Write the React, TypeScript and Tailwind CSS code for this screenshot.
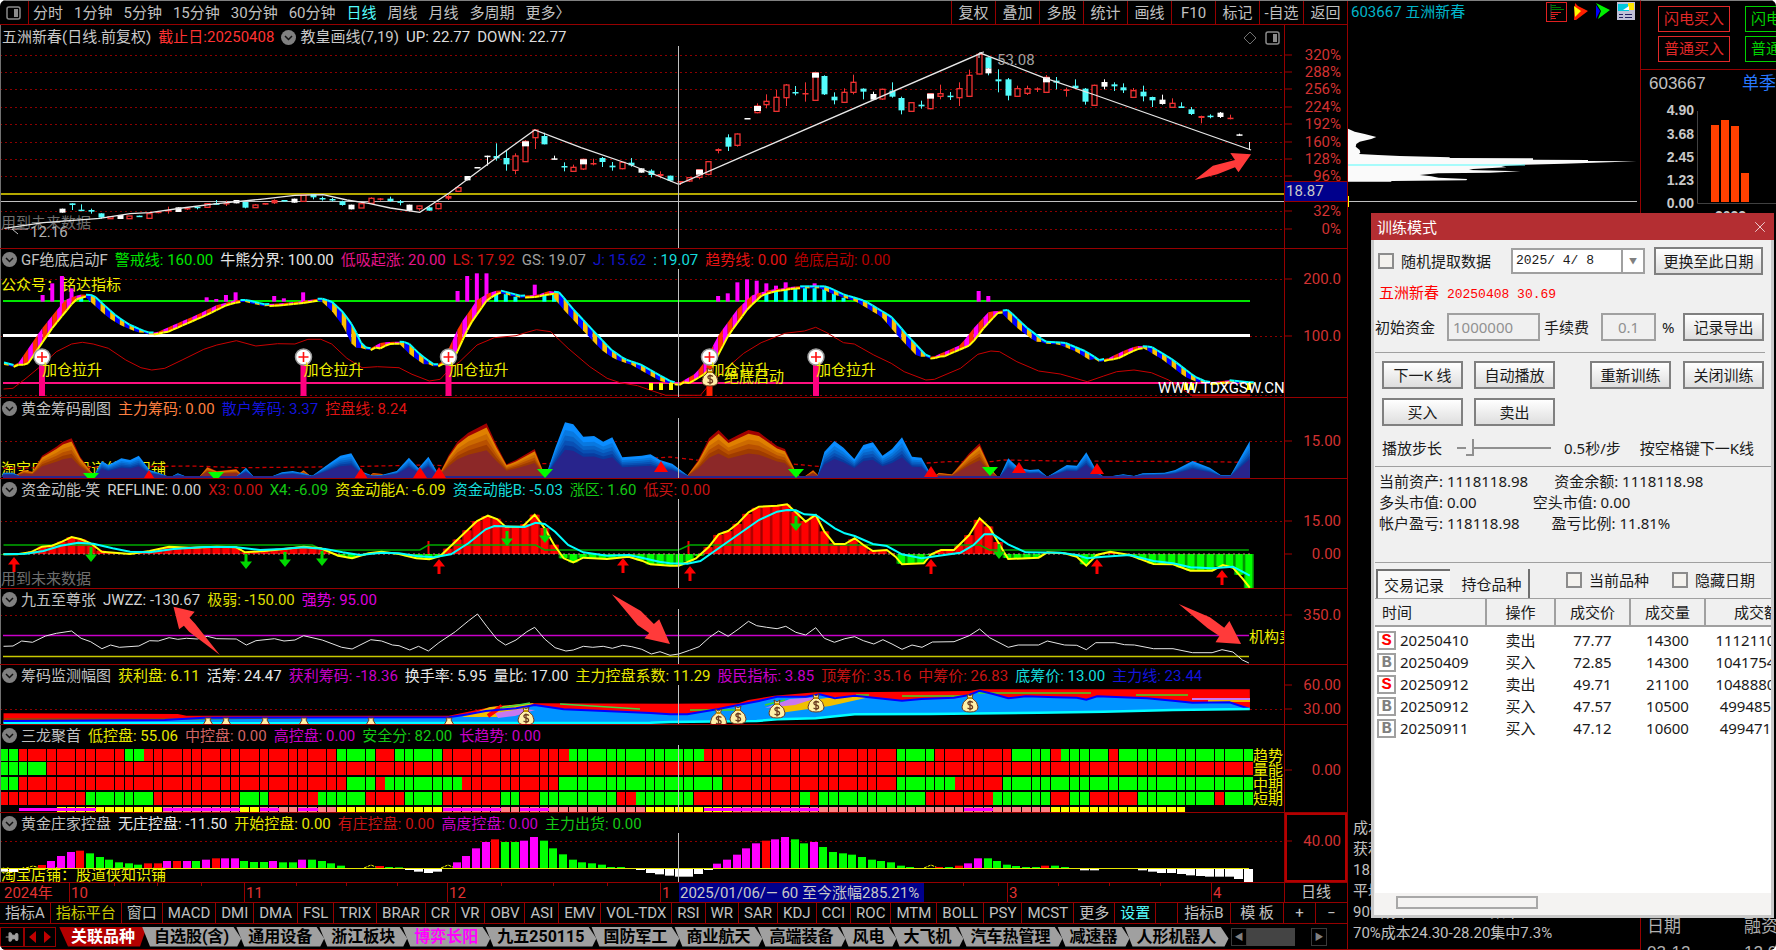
import React from 'react';
import { X, Pin } from 'lucide-react';

type Pt = [number, number];
type Label = [string, string];

const STEP = 9.65;
const barX = (i: number) => 4 + STEP * i;

// Series are stored on a fine grid, in two halves (left of x=670 and right of it).
const toPts = (raw: number[], x0: number, y0: number): Pt[] => {
  const out: Pt[] = [];
  for (let i = 0; i < raw.length; i += 2) {
    out.push([raw[i] / 2.306 + x0, raw[i + 1] / 3 + y0]);
  }
  return out;
};
const series = (y0: number, left: number[], right: number[]): Pt[] => [
  ...toPts(left, 0, y0),
  ...toPts(right, 670, y0),
];
const str = (p: Pt[]) => p.map(([x, y]) => `${x.toFixed(1)},${y.toFixed(1)}`).join(' ');
const at = (p: Pt[], x: number): number => {
  if (x <= p[0][0]) return p[0][1];
  for (let i = 1; i < p.length; i++) {
    if (x <= p[i][0]) {
      const [x1, y1] = p[i - 1];
      const [x2, y2] = p[i];
      return x2 === x1 ? y2 : y1 + ((y2 - y1) * (x - x1)) / (x2 - x1);
    }
  }
  return p[p.length - 1][1];
};

const Line: React.FC<{ p: Pt[]; c: string; w?: number; dash?: string }> = ({ p, c, w = 1, dash }) => (
  <polyline points={str(p)} fill="none" stroke={c} strokeWidth={w} strokeDasharray={dash} />
);

const Dots: React.FC<{ y: number }> = ({ y }) => (
  <line x1={0} x2={1285} y1={y} y2={y} stroke="#8c0000" strokeDasharray="2 3" />
);

/* ---------- candles: [bar, high, top, bottom, low, kind] ---------- */
// r hollow red, s solid red, c cyan, w white, x red with a white head
const candles: [number, number, number, number, number, string][] = [
  [6, 626, 626, 638, 638, 'w'], [7, 610, 610, 615, 630, 'c'], [8, 613, 629, 632, 632, 'c'], [9, 626, 630, 635, 641, 'c'],
  [10, 640, 640, 653, 656, 'c'], [11, 650, 650, 656, 656, 'r'], [12, 645, 645, 657, 657, 'w'], [13, 648, 648, 656, 656, 'r'],
  [14, 647, 647, 651, 651, 'c'], [15, 640, 641, 655, 656, 'r'], [16, 634, 635, 638, 640, 's'], [17, 620, 630, 634, 641, 's'],
  [18, 622, 622, 636, 636, 'w'], [19, 622, 624, 627, 630, 's'], [20, 620, 620, 624, 628, 'c'], [21, 610, 611, 622, 624, 'r'],
  [22, 600, 610, 614, 614, 'c'], [23, 602, 609, 612, 618, 's'], [24, 600, 600, 610, 610, 'w'], [25, 606, 606, 623, 625, 'c'],
  [26, 612, 615, 623, 623, 'r'], [27, 609, 609, 614, 614, 's'], [28, 598, 600, 610, 612, 's'], [29, 600, 600, 604, 604, 'c'],
  [30, 596, 596, 608, 608, 'w'], [31, 583, 585, 604, 604, 'r'], [32, 582, 582, 592, 598, 'c'], [33, 590, 594, 598, 602, 'c'],
  [34, 594, 597, 601, 604, 'c'], [35, 602, 604, 615, 617, 'c'], [36, 614, 614, 628, 628, 'w'], [37, 608, 611, 624, 624, 'r'],
  [38, 592, 595, 610, 612, 'r'], [39, 594, 595, 598, 602, 's'], [40, 590, 596, 603, 606, 'c'], [41, 600, 604, 608, 616, 'c'],
  [42, 614, 614, 632, 634, 'w'], [43, 617, 618, 626, 632, 'r'], [44, 620, 622, 632, 632, 'c'], [45, 608, 611, 626, 628, 'r'],
  [46, 585, 588, 596, 600, 's'], [47, 560, 563, 574, 576, 'r'], [48, 528, 528, 541, 541, 'w'], [49, 501, 501, 504, 504, 'w'],
  [50, 467, 467, 470, 497, 'w'], [51, 430, 468, 475, 482, 'c'], [52, 450, 474, 493, 512, 'c'], [53, 460, 468, 511, 523, 'r'],
  [54, 420, 424, 485, 485, 'x'], [55, 388, 390, 413, 447, 'r'], [56, 398, 408, 433, 433, 'c'], [57, 467, 475, 478, 478, 'w'],
  [58, 487, 498, 501, 514, 'c'], [59, 494, 502, 514, 516, 'r'], [60, 476, 478, 507, 510, 'x'], [61, 476, 489, 492, 496, 's'],
  [62, 471, 474, 486, 501, 'c'], [63, 486, 497, 502, 512, 'c'], [64, 486, 487, 506, 508, 'r'], [65, 474, 488, 496, 500, 'c'],
  [66, 505, 505, 518, 518, 'w'], [67, 508, 512, 525, 532, 'c'], [68, 514, 522, 528, 535, 's'], [69, 527, 527, 542, 544, 'c'],
  [70, 543, 543, 548, 555, 's'], [71, 532, 533, 543, 546, 'r'], [72, 507, 509, 532, 538, 'x'], [73, 483, 485, 523, 526, 'r'],
  [74, 445, 447, 453, 460, 's'], [75, 403, 412, 440, 453, 'c'], [76, 400, 402, 436, 440, 'r'], [77, 354, 354, 357, 357, 'w'],
  [78, 310, 318, 338, 340, 'x'], [79, 283, 304, 314, 325, 'r'], [80, 270, 292, 334, 335, 'r'], [81, 252, 255, 293, 318, 'r'],
  [82, 258, 276, 279, 286, 'c'], [83, 247, 279, 282, 305, 's'], [84, 215, 218, 301, 303, 'x'], [85, 226, 228, 283, 285, 'c'],
  [86, 277, 290, 301, 313, 'c'], [87, 265, 277, 307, 309, 'r'], [88, 224, 247, 277, 283, 'r'], [89, 265, 266, 275, 298, 'c'],
  [90, 275, 282, 299, 300, 'w'], [91, 266, 268, 297, 300, 'r'], [92, 247, 272, 290, 293, 'c'], [93, 290, 294, 331, 343, 'c'],
  [94, 306, 308, 334, 335, 'r'], [95, 302, 314, 319, 326, 'c'], [96, 280, 281, 326, 328, 'x'], [97, 254, 281, 289, 298, 'r'],
  [98, 276, 287, 290, 300, 'c'], [99, 247, 266, 293, 318, 'r'], [100, 209, 226, 289, 291, 'r'], [101, 160, 163, 222, 223, 'r'],
  [102, 172, 172, 205, 226, 'c'], [102, 205, 205, 220, 220, 'w'], [103, 208, 238, 244, 277, 'c'], [104, 234, 238, 287, 301, 'c'],
  [105, 257, 266, 289, 291, 'r'], [106, 257, 266, 280, 285, 'r'], [107, 262, 265, 268, 276, 's'], [108, 225, 232, 277, 279, 'x'],
  [109, 231, 242, 248, 268, 'c'], [110, 263, 268, 273, 290, 's'], [111, 238, 257, 264, 266, 'c'], [112, 264, 266, 305, 314, 'c'],
  [113, 254, 256, 316, 318, 'r'], [114, 238, 246, 260, 268, 'w'], [115, 247, 253, 259, 273, 'c'], [116, 250, 262, 271, 279, 'c'],
  [117, 264, 272, 292, 294, 'r'], [118, 257, 275, 289, 304, 'c'], [119, 290, 291, 301, 321, 'c'], [120, 284, 299, 312, 314, 'w'],
  [121, 295, 310, 322, 324, 'r'], [122, 307, 319, 324, 324, 'c'], [123, 321, 328, 342, 345, 'c'], [124, 347, 348, 354, 370, 's'],
  [125, 343, 347, 350, 355, 'c'], [126, 336, 338, 351, 354, 'w'], [127, 344, 353, 357, 358, 's'], [128, 401, 403, 407, 407, 'w'],
];

const candleColor: Record<string, string> = { r: '#f03232', s: '#f03232', x: '#f03232', c: '#54fcfc', w: '#ffffff' };

const Candles = () => (
  <g>
    {candles.map(([i, hi, top, bot, lo, k], n) => {
      const x = Math.round(barX(i));
      const c = candleColor[k];
      const h = Math.max(1.5, (bot - top) / 3);
      const hollow = k === 'r' || k === 'x';
      return (
        <g key={n}>
          <line x1={x + 0.5} x2={x + 0.5} y1={hi / 3} y2={lo / 3} stroke={c} />
          <rect x={hollow ? x - 2 : x - 2.5} y={top / 3} width={hollow ? 5 : 6} height={h} fill={hollow ? '#000' : c} stroke={hollow ? c : 'none'} strokeWidth={1.3} />
          {k === 'x' && <rect x={x - 3} y={top / 3} width={7} height={5} fill="#fff" />}
        </g>
      );
    })}
  </g>
);

const trendLine = series(0,
  [10, 685, 100, 668, 230, 655, 300, 641, 345, 638, 420, 624, 500, 611, 600, 598, 680, 586, 745, 584, 800, 600, 850, 610, 900, 624, 968, 637, 1035, 580, 1150, 468, 1233, 390, 1340, 443, 1450, 492],
  [20, 553, 717, 160, 860, 232, 980, 285, 1340, 450]);

/* ---------- oscillator band ---------- */
const bandPts = series(245,
  [8, 352, 38, 362, 97, 250, 150, 165, 185, 148, 215, 150, 240, 180, 270, 215, 300, 240, 340, 262, 360, 263, 400, 240, 450, 212, 500, 180, 545, 165, 570, 165, 610, 178, 650, 175, 700, 168, 740, 160, 765, 170, 790, 200, 815, 245, 835, 300, 850, 313, 880, 292, 920, 290, 940, 292, 970, 330, 1000, 358, 1018, 358, 1035, 310, 1060, 240, 1100, 165, 1125, 145, 1150, 135, 1200, 152, 1240, 150, 1265, 138, 1290, 142, 1320, 190, 1370, 260, 1410, 315, 1440, 342, 1480, 360, 1520, 390, 1540, 404],
  [0, 408, 20, 415, 60, 385, 80, 350, 112, 270, 157, 190, 190, 150, 230, 135, 290, 124, 360, 124, 400, 148, 450, 168, 510, 215, 550, 275, 590, 330, 605, 337, 625, 325, 670, 300, 700, 250, 735, 200, 780, 195, 820, 245, 865, 290, 910, 293, 960, 320, 990, 345, 1010, 340, 1050, 315, 1075, 303, 1110, 305, 1160, 345, 1210, 395, 1240, 412, 1290, 406, 1337, 412]);

const Band = () => {
  const cells: React.ReactNode[] = [];
  const half = STEP / 2;
  let n = 0;
  for (let x = 4; x < 1249; x += half) {
    const x2 = x + half;
    const rising = at(bandPts, x - 4) > at(bandPts, x + 8);
    const d = rising ? -10 : 10;
    const u1 = at(bandPts, x);
    const u2 = at(bandPts, x2);
    const l1 = Math.max(u1 + 2, at(bandPts, x + d));
    const l2 = Math.max(u2 + 2, at(bandPts, x2 + d));
    const odd = n % 2 === 1;
    const fill = rising ? (odd ? '#ff00ff' : '#ff3000') : odd ? '#0000ff' : '#ffc000';
    cells.push(<polygon key={n} points={`${x},${u1} ${x2},${u2} ${x2},${l2} ${x},${l1}`} fill={fill} />);
    cells.push(
      rising
        ? <line key={`l${n}`} x1={x} y1={l1} x2={x2} y2={l2} stroke="#ffff00" strokeWidth={2} />
        : <line key={`l${n}`} x1={x} y1={u1} x2={x2} y2={u2} stroke="#00ffff" strokeWidth={2} />
    );
    n++;
  }
  return <g>{cells}</g>;
};

const slowLine = series(245,
  [8, 432, 30, 430, 60, 400, 97, 360, 130, 320, 165, 297, 190, 292, 215, 297, 250, 310, 290, 345, 325, 368, 350, 375, 380, 370, 420, 345, 470, 313, 500, 300, 545, 287, 590, 303, 640, 296, 680, 297, 710, 283, 740, 283, 765, 297, 800, 340, 835, 368, 870, 365, 920, 368, 950, 388, 990, 408, 1015, 403, 1035, 375, 1060, 350, 1100, 300, 1140, 278, 1190, 272, 1215, 262, 1237, 254, 1270, 260, 1310, 310, 1360, 365, 1400, 400, 1430, 413, 1470, 422, 1510, 440, 1535, 451],
  [0, 451, 70, 451, 90, 420, 130, 370, 170, 325, 210, 293, 265, 265, 310, 258, 336, 247, 360, 262, 400, 293, 425, 297, 470, 330, 510, 355, 540, 380, 590, 405, 610, 403, 670, 370, 710, 328, 740, 318, 760, 320, 800, 350, 850, 378, 900, 387, 962, 410, 1000, 393, 1030, 380, 1070, 375, 1110, 383, 1150, 405, 1190, 440, 1205, 451, 1337, 451]);

// [bar, top, bottom]
const pinkTicks: number[][] = [
  [4, 150, 170], [5, 115, 170], [6, 93, 200], [7, 130, 170], [21, 157, 170], [22, 162, 170], [23, 150, 170], [24, 142, 170],
  [28, 153, 170], [29, 160, 170], [31, 142, 170], [47, 138, 170], [48, 93, 170], [49, 85, 190], [50, 85, 170], [55, 119, 150],
  [74, 153, 170], [75, 145, 170], [76, 112, 170], [77, 103, 185], [78, 107, 150], [79, 115, 140], [80, 122, 135], [81, 112, 130], [84, 115, 126],
  [101, 138, 170], [102, 153, 170],
];
const cyanTicks: number[][] = [
  [8, 152, 170], [9, 152, 170], [51, 145, 170], [52, 145, 170], [53, 155, 170], [56, 150, 170], [57, 150, 170],
  [79, 145, 170], [80, 138, 170], [81, 132, 170], [82, 128, 170], [83, 128, 170], [84, 128, 170], [85, 130, 170], [86, 145, 170], [87, 158, 170],
];

/* ---------- chip areas ---------- */
const warm: Pt[][] = [
  toPts([30, 695, 55, 675, 75, 680, 97, 632, 130, 605, 145, 590, 165, 580, 185, 635, 210, 680, 225, 695], 0, 245),
  toPts([460, 695, 478, 665, 500, 678, 545, 672, 562, 695], 0, 245),
  toPts([680, 695, 700, 675, 718, 695], 0, 245),
  toPts([850, 695, 860, 684, 880, 686, 890, 695], 0, 245),
  toPts([1010, 695, 1035, 630, 1055, 590, 1080, 563, 1122, 535, 1145, 600, 1168, 658, 1190, 645, 1233, 612, 1250, 670, 1258, 695], 0, 245),
  toPts([38, 695, 65, 645, 90, 580, 112, 555, 135, 585, 157, 570, 181, 555, 205, 562, 247, 603, 265, 612, 290, 680, 300, 695], 670, 245),
  toPts([310, 695, 330, 675, 345, 695], 670, 245),
  toPts([608, 695, 620, 683, 650, 688, 690, 625, 714, 595, 737, 665, 755, 695], 670, 245),
];
const cool: Pt[][] = [
  toPts([4, 695, 8, 683, 30, 683, 48, 695], 0, 245),
  toPts([215, 695, 235, 648, 250, 660, 280, 640, 300, 645, 320, 632, 345, 675, 365, 683, 390, 695], 0, 245),
  toPts([395, 695, 410, 685, 430, 695], 0, 245),
  toPts([545, 695, 567, 668, 585, 695], 0, 245),
  toPts([625, 695, 650, 682, 675, 678, 700, 685, 720, 692, 765, 650, 785, 632, 810, 625, 835, 680, 860, 692, 880, 690, 915, 678, 943, 638, 965, 670, 988, 635, 1010, 685, 1015, 695], 0, 245),
  toPts([1258, 695, 1280, 610, 1303, 532, 1322, 538, 1345, 575, 1370, 573, 1391, 590, 1412, 577, 1435, 637, 1480, 632, 1500, 628, 1522, 645, 1550, 656, 1590, 695], 0, 245),
  toPts([340, 695, 356, 620, 379, 588, 400, 608, 425, 642, 446, 600, 468, 592, 490, 632, 512, 612, 535, 577, 558, 635, 580, 638, 600, 685, 610, 695], 670, 245),
  toPts([760, 695, 780, 640, 803, 668, 830, 675, 850, 673, 870, 695], 670, 245),
  toPts([870, 695, 915, 660, 938, 662, 960, 622, 985, 680, 1000, 695], 670, 245),
  toPts([1010, 695, 1045, 688, 1070, 693, 1090, 685, 1140, 683, 1165, 675, 1205, 648, 1245, 668, 1270, 690, 1293, 690, 1310, 650, 1337, 588, 1337, 695], 670, 245),
];
const warmShades: [number, string][] = [[1, '#a00000'], [0.92, '#e08000'], [0.8, '#cc6a00'], [0.7, '#b85000'], [0.6, '#a03c00'], [0.5, '#8c2828']];
const coolShades: [number, string][] = [[1, '#0a8cff'], [0.86, '#0878e0'], [0.76, '#0864c8'], [0.67, '#0850b4'], [0.58, '#083ca0'], [0.5, '#28248c']];
const layered = (areas: Pt[][], shades: [number, string][]) =>
  areas.flatMap((a, n) =>
    shades.map(([k, c]) => (
      <polygon key={`${n}-${k}`} fill={c} points={str(a.map(([x, y]): Pt => [x, 477 - (477 - y) * k]))} />
    ))
  );
const chipDash = series(245, [8, 670, 440, 663, 560, 668, 800, 665, 980, 660, 1060, 664, 1450, 648, 1520, 638], [0, 636, 60, 645, 290, 658, 350, 665, 580, 655, 640, 650, 740, 650, 770, 645, 900, 648, 1240, 650, 1337, 652]);

/* ---------- momentum ---------- */
const momA = series(475,
  [8, 238, 40, 238, 70, 232, 97, 215, 120, 212, 143, 200, 165, 186, 187, 193, 209, 205, 235, 230, 300, 237, 345, 228, 390, 215, 440, 218, 500, 215, 545, 217, 565, 232, 610, 228, 655, 222, 700, 215, 740, 220, 780, 242, 812, 250, 850, 235, 880, 230, 920, 237, 960, 250, 990, 253, 1015, 243, 1050, 200, 1100, 138, 1125, 122, 1146, 132, 1166, 155, 1205, 155, 1233, 119, 1256, 160, 1278, 210, 1300, 250, 1322, 262, 1345, 248, 1400, 252, 1450, 245, 1480, 257, 1500, 268],
  [0, 272, 20, 272, 60, 250, 90, 215, 112, 178, 134, 168, 157, 145, 181, 112, 205, 95, 247, 92, 270, 88, 290, 112, 313, 140, 336, 120, 356, 170, 379, 207, 403, 207, 426, 190, 446, 210, 468, 228, 500, 225, 520, 245, 535, 268, 585, 265, 602, 238, 625, 225, 655, 225, 690, 180, 714, 130, 737, 158, 758, 205, 780, 252, 850, 248, 870, 232, 910, 235, 938, 245, 960, 272, 984, 240, 1015, 230, 1060, 240, 1115, 267, 1160, 268, 1200, 287, 1250, 287, 1275, 270, 1298, 278, 1320, 310, 1337, 338]);
const momB = series(475,
  [8, 238, 60, 236, 100, 228, 140, 212, 180, 203, 215, 206, 260, 220, 300, 230, 345, 232, 400, 222, 470, 216, 540, 216, 600, 225, 650, 222, 700, 217, 750, 222, 790, 232, 830, 240, 880, 233, 920, 235, 960, 243, 1000, 247, 1040, 238, 1080, 205, 1120, 163, 1140, 153, 1210, 156, 1235, 143, 1256, 147, 1280, 170, 1310, 210, 1345, 232, 1400, 242, 1450, 240, 1480, 248, 1520, 260],
  [0, 265, 40, 266, 70, 258, 112, 220, 150, 185, 205, 135, 247, 110, 270, 105, 290, 106, 310, 118, 336, 120, 380, 160, 403, 175, 426, 183, 468, 207, 500, 213, 535, 238, 580, 250, 620, 242, 670, 233, 700, 210, 725, 178, 745, 178, 780, 208, 820, 232, 900, 233, 938, 240, 962, 250, 1000, 245, 1060, 240, 1115, 258, 1160, 265, 1200, 277, 1250, 280, 1298, 275, 1320, 290, 1337, 302]);
const momRange = series(475, [8, 210, 720, 210, 745, 225, 968, 225, 988, 210, 1235, 210, 1256, 225], [20, 225, 45, 210, 714, 210, 737, 225, 1335, 225]);

const jwzz = series(475,
  [8, 514, 30, 513, 50, 498, 75, 502, 105, 483, 130, 475, 165, 468, 187, 490, 209, 500, 235, 521, 255, 510, 275, 517, 320, 513, 345, 497, 365, 498, 390, 488, 410, 493, 430, 490, 455, 492, 478, 484, 500, 491, 545, 492, 568, 510, 590, 497, 633, 491, 655, 498, 680, 495, 700, 482, 743, 495, 788, 517, 812, 522, 855, 494, 880, 498, 905, 510, 920, 512, 945, 525, 965, 514, 988, 528, 1012, 503, 1050, 470, 1080, 438, 1101, 417, 1123, 455, 1146, 493, 1166, 510, 1190, 495, 1215, 470, 1233, 457, 1256, 492, 1280, 518, 1305, 528, 1322, 525, 1345, 514, 1367, 517, 1391, 514, 1412, 520, 1436, 511, 1457, 515, 1480, 523, 1502, 537, 1522, 530],
  [0, 541, 20, 537, 45, 526, 67, 515, 91, 487, 112, 468, 134, 484, 157, 463, 181, 439, 200, 452, 223, 457, 247, 461, 267, 454, 290, 472, 313, 480, 336, 458, 356, 490, 379, 502, 403, 491, 426, 485, 446, 497, 470, 507, 491, 494, 512, 507, 535, 523, 558, 510, 581, 517, 605, 501, 655, 500, 690, 482, 714, 462, 737, 488, 780, 517, 803, 510, 850, 510, 870, 498, 910, 510, 938, 511, 960, 524, 982, 503, 1026, 503, 1048, 509, 1071, 510, 1115, 521, 1160, 521, 1205, 533, 1250, 533, 1273, 524, 1298, 531, 1320, 555, 1335, 564]);

/* ---------- chip monitor ---------- */
const monTop = series(475, [8, 715, 410, 717, 430, 722, 1035, 722, 1080, 710, 1130, 697, 1150, 693, 1233, 685], [0, 686, 157, 685, 181, 675, 240, 662, 336, 652, 426, 652, 690, 648, 714, 643, 1337, 643]);
const monBlue = series(475, [8, 738, 380, 735, 470, 728, 1035, 727, 1080, 718, 1120, 708, 1190, 700, 1233, 690, 1300, 703, 1500, 714], [0, 718, 40, 718, 112, 702, 157, 690, 205, 678, 247, 665, 313, 665, 345, 658, 380, 670, 426, 662, 535, 677, 580, 672, 655, 668, 690, 660, 714, 647, 745, 657, 780, 670, 820, 664, 890, 667, 938, 668, 960, 674, 985, 664, 1100, 670, 1160, 677, 1205, 683, 1290, 682, 1337, 702]);
const monCyan = series(475, [8, 745, 1040, 744, 1500, 743], [0, 741, 200, 738, 247, 733, 336, 730, 426, 718, 600, 717, 850, 713, 1000, 710, 1160, 705, 1337, 702]);

/* ---------- trend cells: runs start at `first`, each number is where the colour flips ---------- */
const cellRows: { y: number; h: number; first: string; flips: number[] }[] = [
  { y: 749, h: 12, first: 'g', flips: [2, 13, 15, 35, 39, 41, 46, 59, 73, 93, 97, 105, 109, 110, 115, 116, 130] },
  { y: 762, h: 13, first: 'g', flips: [5, 130] },
  { y: 777, h: 13, first: 'g', flips: [2, 36, 39, 40, 48, 58, 75, 93, 99, 104, 130] },
  { y: 792, h: 13, first: 'r', flips: [9, 16, 25, 28, 33, 38, 42, 46, 52, 54, 56, 64, 66, 72, 83, 84, 85, 96, 103, 109, 111, 113, 118, 126, 127, 130] },
];
const strip: [number, number, string, boolean][] = [
  [2, 6, '#000000', true], [6, 10, '#ffff00', true], [10, 17, '#ffff00', false], [17, 25, '#ff8080', true], [25, 27, '#ffff00', false],
  [27, 29, '#ff8080', true], [29, 31, '#ff8080', false], [31, 33, '#ff8080', true], [33, 35, '#ff8080', false], [35, 46, '#ffff00', false],
  [46, 52, '#ff8080', true], [52, 54, '#ff8080', false], [54, 57, '#ff8080', true], [57, 67, '#ff8080', false], [67, 73, '#ffff00', false],
  [73, 76, '#ffff00', true], [76, 85, '#ff8080', true], [85, 100, '#ff8080', false], [100, 103, '#ff8080', true], [103, 109, '#ff8080', false],
  [109, 123, '#ffff00', false],
];
const joined = (i: number) => [3, 6, 10].includes(i % 11);

const Cells = () => (
  <g>
    {cellRows.map((row) => {
      let on = row.first === 'g';
      let f = 0;
      return Array.from({ length: 130 }, (_, i) => {
        if (i >= row.flips[f]) {
          f++;
          on = !on;
        }
        const x = Math.max(0, Math.round(barX(i) - 4.8));
        const x2 = Math.round(barX(i + 1) - 4.8) - (joined(i) ? 0 : 1);
        return <rect key={`${row.y}-${i}`} x={x} y={row.y} width={x2 - x} height={row.h} fill={on ? '#00ff00' : '#ff0000'} />;
      });
    })}
    {strip.map(([a, b, c, mid]) =>
      Array.from({ length: b - a }, (_, k) => {
        const x = Math.round(barX(a + k) - 4.8);
        const w = Math.round(barX(a + k + 1) - 4.8) - x;
        return (
          <g key={a + k}>
            <rect x={x} y={807} width={w - 1} height={5} fill={c} />
            {mid && <rect x={x} y={808} width={w} height={3} fill="#ff00ff" />}
          </g>
        );
      })
    )}
  </g>
);

/* ---------- control bars: [first bar, 'colour'+top, ...] ---------- */
const controlRuns: [number, string][] = [
  [0, 'w455 w456 w450 y441 r435 m423 m408 m396 r392 g400 g411 g419 g427 g430 g434 r430 r430 m423 r423 m423 g423 m419 r415 m415 m415 g423 g426 g426 m423 g427 g427 m419 g419 g423 g430 g437'],
  [38, 'y438 r438 g441 g442 w450 w455 w459 w455 y438 m427 m408 m385 m366 r358 g366 g366 m362 m351 g362 g385 g403 g419 g427 g430 g434 g441 g441 g445 w450 w459 w463 w467 w470 w470 w462 w450 m431 m419 m404 m385 m370 r362 m358 m351 g358 g370 m366 g381 g396 g400 g404 g411 g419 g423 g427 g437 g441'],
  [96, 'y438 r441 g441 r437 m430 m415 g415 g423 g434 g438 g441 g441 r437 g437 g441 g445 w451 w451'],
  [118, 'w451 w455 w459 w459 w462 w466 w468 w470 w470 w470 w477 w486'],
];
const barColor: Record<string, string> = { m: '#ff00ff', g: '#00ff00', r: '#ff0000', w: '#ffffff' };

const ControlBars = () => (
  <g>
    {controlRuns.flatMap(([start, run]) =>
      run.split(' ').map((s, k) => {
        const c = s[0];
        const y = Number(s.slice(1)) / 3 + 720;
        const x = Math.round(barX(start + k) - 4.8);
        if (c === 'y') return <path key={start + k} d={`M${x - 2} 868 L${x + 5} ${y - 1} L${x + 12} 868`} fill="none" stroke="#ffff00" strokeDasharray="3 1" />;
        return <rect key={start + k} x={x} y={Math.min(y, 869)} width={c === 'w' ? 9 : 8} height={Math.abs(y - 869)} fill={barColor[c]} />;
      })
    )}
    <line x1={0} x2={1249} y1={868.5} y2={868.5} stroke="#e6e600" />
  </g>
);

/* ---------- markers ---------- */
const MoneyBag: React.FC<{ x: number; y: number }> = ({ x, y }) => (
  <g transform={`translate(${x - 9} ${y})`}>
    <path d="M6 1 L9 3 L12 1 L11 5 Q17 9 17 14 Q17 19 9 19 Q1 19 1 14 Q1 9 7 5 Z" fill="#fff0a8" stroke="#6b3a1e" />
    <path d="M7 5 H11" stroke="#c89600" strokeWidth={2} />
    <path d="M12 9.500 Q9 7.500 7 9.500 Q6.500 11.500 9 12 Q12 12.500 11.500 15 Q9.500 17 6.500 15 M9 7.500 V17.500" fill="none" stroke="#6b3a1e" strokeWidth={1.3} />
  </g>
);
const PlusBadge: React.FC<{ x: number; y: number }> = ({ x, y }) => (
  <g>
    <circle cx={x} cy={y} r={8} fill="#fff" stroke="#9a9a9a" strokeWidth={1.5} />
    <path d={`M${x - 5} ${y} H${x + 5} M${x} ${y - 5} V${y + 5}`} stroke="#ff1010" strokeWidth={1.6} />
  </g>
);
const Arrow: React.FC<{ x: number; y: number; up?: boolean }> = ({ x, y, up }) => (
  <path
    transform={`translate(${x} ${y})`}
    d={up ? 'M0 0 L6 7.500 H1.500 V15 H-1.500 V7.500 H-6 Z' : 'M0 15 L6 7.500 H1.500 V0 H-1.500 V7.500 H-6 Z'}
    fill={up ? '#ff0000' : '#00d800'}
  />
);
const Pointer: React.FC<{ raw: number[]; x0: number; y0: number }> = ({ raw, x0, y0 }) => (
  <polygon points={str(toPts(raw, x0, y0))} fill="#ff3a3a" />
);
const Note: React.FC<{ x: number; y: number; c?: string; children: React.ReactNode }> = ({ x, y, c = '#f0f000', children }) => (
  <text x={x} y={y} fill={c} fontSize={15}>{children}</text>
);

const ChevronDot = () => (
  <svg className="size-[15px] shrink-0" viewBox="0 0 15 15">
    <circle cx="7.500" cy="7.500" r="7.500" fill="#808080" />
    <path d="M4 6 L7.500 9.500 L11 6" fill="none" stroke="#111" strokeWidth="1.500" />
  </svg>
);
const SplitIcon = () => (
  <svg className="size-4 shrink-0" viewBox="0 0 16 16">
    <rect x="1" y="2" width="13" height="12" rx="2" fill="none" stroke="#8a8a8a" strokeWidth="1.500" />
    <rect x="8" y="4" width="4" height="8" fill="#8a8a8a" />
  </svg>
);

/* ---------- panel frame ---------- */
interface PanelProps {
  top: number;
  height: string;
  title: string;
  labels: Label[];
  ticks: [number, string][];
  active?: boolean;
  children: React.ReactNode;
}

const Axis: React.FC<{ top: number; ticks: [number, string][]; children?: React.ReactNode }> = ({ top, ticks, children }) => (
  <svg className="h-full w-full">
    <g transform={`translate(0 ${-top})`}>
      {ticks.map(([y, t]) => (
        <g key={t}>
          <line x1={0} x2={7} y1={y} y2={y} stroke="#a00000" />
          <text x={56} y={y + 5} textAnchor="end" fontSize={15} fill="#d23232">{t}</text>
        </g>
      ))}
      {children}
    </g>
  </svg>
);

const Panel: React.FC<PanelProps> = ({ top, height, title, labels, ticks, active, children }) => (
  <section className={`grid grid-cols-[minmax(0,1fr)_64px] grid-rows-[minmax(0,1fr)] border-b border-[#960000] ${height}`}>
    <div className="grid grid-cols-[minmax(0,1fr)] grid-rows-[minmax(0,1fr)]">
      <svg className="col-start-1 row-start-1 h-full w-full">
        <g transform={`translate(0 ${-top})`}>
          {children}
          <line x1={678.5} x2={678.5} y1={top + 20} y2={top + 150} stroke="#c0c0c0" />
          <line x1={0.5} x2={0.5} y1={top} y2={top + 150} stroke="#707070" />
        </g>
      </svg>
      <h2 className="col-start-1 row-start-1 flex h-[21px] items-center gap-[7px] pl-0.5 whitespace-nowrap text-[#c0c0c0]">
        <span className="flex items-center gap-1"><ChevronDot />{title}</span>
        {labels.map(([t, c]) => (
          <span key={t} style={{ color: c }}>{t}</span>
        ))}
      </h2>
    </div>
    <div className={`border-x border-[#960000] ${active ? 'shadow-[inset_0_0_0_2px_#b40000]' : ''}`}>
      <Axis top={top} ticks={ticks} />
    </div>
  </section>
);

/* ---------- toolbars ---------- */
const periods = ['分时', '1分钟', '5分钟', '15分钟', '30分钟', '60分钟', '日线', '周线', '月线', '多周期', '更多〉'];
const tools = ['复权', '叠加', '多股', '统计', '画线', 'F10', '标记', '-自选', '返回'];
const indicators = ['指标A', '指标平台', '窗口', 'MACD', 'DMI', 'DMA', 'FSL', 'TRIX', 'BRAR', 'CR', 'VR', 'OBV', 'ASI', 'EMV', 'VOL-TDX', 'RSI', 'WR', 'SAR', 'KDJ', 'CCI', 'ROC', 'MTM', 'BOLL', 'PSY', 'MCST', '更多', '设置'];
const boards = ['关联品种', '自选股(含)', '通用设备', '浙江板块', '博弈长阳', '九五250115', '国防军工', '商业航天', '高端装备', '风电', '大飞机', '汽车热管理', '减速器', '人形机器人'];

const Toolbar = () => (
  <nav className="flex h-[25px] items-stretch border-t border-b border-t-[#808080] border-b-[#960000] whitespace-nowrap text-[#c0c0c0]">
    <button aria-label="面板" className="mr-1 flex w-[29px] items-center justify-center border-r border-[#960000]"><SplitIcon /></button>
    <div className="flex items-center gap-[11px]">
      {periods.map((p) => (
        <button key={p} className={p === '日线' ? 'text-[#54fcfc]' : ''}>{p}</button>
      ))}
    </div>
    <div className="ml-auto flex border-r border-[#960000]">
      {tools.map((t) => (
        <button key={t} className="w-11 border-l border-[#960000]">{t}</button>
      ))}
    </div>
  </nav>
);

const IndicatorBar = () => (
  <nav className="flex h-[21px] border-b border-[#960000] whitespace-nowrap text-[#c0c0c0]">
    <div className="flex min-w-0 flex-1">
      {indicators.map((t) => (
        <button
          key={t}
          className={`grow border-r border-[#960000] px-1 ${t === '指标平台' ? 'text-[#c8c800]' : t === '设置' ? 'text-[#54fcfc]' : ''}`}
        >
          {t}
        </button>
      ))}
    </div>
    <div className="flex border-r border-[#960000]">
      <span className="w-[21px]" />
      <button className="w-[53px] border-l border-[#960000]">指标B</button>
      <button className="w-[53px] border-l border-[#960000]">模 板</button>
      <button className="w-8 border-l border-[#960000]">+</button>
      <button className="w-8 border-l border-[#960000]">−</button>
    </div>
  </nav>
);

const BoardTabs = () => (
  <nav className="flex h-[26px] items-center border-r border-b border-[#960000] text-[16px] font-bold whitespace-nowrap">
    <button aria-label="固定" className="flex h-5 w-6 items-center justify-center border border-[#960000] text-[#a0a0a0]"><Pin size={14} className="rotate-90" fill="#a0a0a0" /></button>
    <button aria-label="翻页" className="mr-[3px] flex h-5 w-8 items-center justify-center border border-[#960000]">
      <svg className="h-3 w-6" viewBox="0 0 24 12"><path d="M8 0 V12 L1 6 Z M16 0 V12 L23 6 Z" fill="#c00000" /></svg>
    </button>
    <div className="flex">
      {boards.map((b, i) => (
        <button
          key={b}
          className={`h-5 leading-5 pr-3 pl-3 ${i ? '-ml-[5px]' : ''} ${
            i === 0
              ? 'bg-[#b40000] text-white [clip-path:polygon(0_0,100%_0,calc(100%-7px)_100%,9px_100%)]'
              : 'bg-[#a0a0a0] [clip-path:polygon(0_0,calc(100%-8px)_0,100%_60%,calc(100%-4px)_100%,8px_100%)]'
          } ${i === 4 ? 'text-[#ff00ff]' : i ? 'text-black' : ''}`}
        >
          {b}
        </button>
      ))}
    </div>
    <div className="mr-5 ml-auto flex h-[18px] items-stretch">
      <button aria-label="左" className="w-4 border border-[#3a3a3a] text-[9px] leading-4 text-[#808080]">◀</button>
      <span className="mr-4 w-12 bg-[#444]" />
      <button aria-label="右" className="w-4 border border-[#3a3a3a] text-[9px] leading-4 text-[#808080]">▶</button>
    </div>
  </nav>
);

/* ---------- main chart ---------- */
const priceTicks: [number, string][] = [[55, '320%'], [72, '288%'], [89, '256%'], [107, '224%'], [124, '192%'], [142, '160%'], [159, '128%'], [176, '96%'], [211, '32%'], [229, '0%']];

const PricePanel = () => (
  <section className="grid h-[224px] grid-cols-[minmax(0,1fr)_64px] grid-rows-[minmax(0,1fr)] border-b border-[#960000]">
    <div className="grid grid-cols-[minmax(0,1fr)] grid-rows-[minmax(0,1fr)]">
      <svg className="col-start-1 row-start-1 h-full w-full">
        <g transform="translate(0 -25)">
          {priceTicks.map(([y]) => <Dots key={y} y={y + 0.5} />)}
          <Note x={1} y={228} c="#6e6e6e">用到未来数据</Note>
          <Note x={30} y={237} c="#b0b0b0">12.16</Note>
          <path d="M12 229 H28 M12 229 L18 234" stroke="#c0c0c0" fill="none" />
          <line x1={0} x2={1285} y1={194} y2={194} stroke="#b4a800" strokeWidth={2} />
          <line x1={0} x2={1285} y1={201.5} y2={201.5} stroke="#c0c0c0" />
          <Candles />
          <Line p={trendLine} c="#e8e8e8" w={1.3} />
          <path d="M1249.500 142 V150 M979 58 V53 L984 52" stroke="#e8e8e8" fill="none" />
          <Note x={997} y={65} c="#a0a0a0">53.08</Note>
          <path d="M1250 32 L1256 38 L1250 44 L1244 38 Z" fill="none" stroke="#707070" />
          <rect x={1266} y={32} width={13} height={12} rx={2} fill="none" stroke="#8a8a8a" strokeWidth={1.5} />
          <rect x={1273} y={34} width={4} height={8} fill="#8a8a8a" />
          <line x1={678.5} x2={678.5} y1={46} y2={250} stroke="#c0c0c0" />
          <line x1={0.5} x2={0.5} y1={25} y2={250} stroke="#707070" />
          <Pointer raw={[1210, 540, 1252, 497, 1303, 480, 1292, 459, 1340, 463, 1311, 517, 1303, 502, 1262, 523]} x0={670} y0={0} />
        </g>
      </svg>
      <h2 className="col-start-1 row-start-1 flex h-6 items-center gap-[7px] pl-0.5 whitespace-nowrap text-[#c8c8c8]">
        <span>五洲新春(日线.前复权)</span>
        <span className="text-[#ff3232]">截止日:20250408</span>
        <span className="flex items-center gap-1"><ChevronDot />教皇画线(7,19)</span>
        <span className="text-[#dcdcdc]">UP: 22.77</span>
        <span className="text-[#dcdcdc]">DOWN: 22.77</span>
      </h2>
    </div>
    <div className="border-x border-[#960000]">
      <Axis top={25} ticks={priceTicks}>
        <rect x={0} y={182} width={62} height={19} fill="#00008c" />
        <path d="M0 181.500 H62 M0 201.500 H62" stroke="#960000" />
        <text x={1} y={196} fontSize={15} fill="#c8c8c8">18.87</text>
      </Axis>
    </div>
  </section>
);

const redUp: number[][] = [[149, 473], [361, 471], [420, 470], [439, 470], [661, 464], [931, 469], [1019, 465], [1097, 466]];
const greenDown: number[][] = [[91, 474], [216, 473], [545, 470], [796, 470], [990, 468]];
const badges = [42, 303.5, 448.5, 709.5, 816];
const smallBags = [208, 226, 265, 304, 371, 449];

const TimeAxis = () => (
  <div className="grid h-5 grid-cols-[minmax(0,1fr)_64px] grid-rows-[minmax(0,1fr)] border-b border-[#960000]">
    <svg className="h-full w-full">
      {[69.5, 244.5, 447.5, 660.5, 1007.5, 1211.5].map((x) => <line key={x} x1={x} x2={x} y1={0} y2={20} stroke="#960000" />)}
      {[114, 157, 201, 296, 346, 397, 501, 553, 607, 963, 1058, 1109, 1160].map((x) => <line key={x} x1={x + 0.5} x2={x + 0.5} y1={0} y2={3} stroke="#960000" />)}
      {([[4, '2024年'], [71, '10'], [246, '11'], [449, '12'], [662, '1'], [1009, '3'], [1213, '4']] as [number, string][]).map(([x, t]) => (
        <text key={x} x={x} y={15} fontSize={15} fill="#e03232">{t}</text>
      ))}
      <rect x={679} y={0} width={245} height={19} fill="#00008c" />
      <text x={680} y={15} fontSize={15} fill="#c8c8c8">2025/01/06/— 60 至今涨幅285.21%</text>
    </svg>
    <div className="border-x border-[#960000] text-center leading-[19px] text-[#c0c0c0]">日线</div>
  </div>
);

const Charts = () => (
  <>
    <PricePanel />
    <Panel
      top={249} height="h-[149px]" title="GF绝底启动F"
      labels={[['警戒线: 160.00', '#00e600'], ['牛熊分界: 100.00', '#e6e6e6'], ['低吸起涨: 20.00', '#e6148c'], ['LS: 17.92', '#d21414'], ['GS: 19.07', '#a0a0a0'], ['J: 15.62', '#1414c8'], [': 19.07', '#14dcdc'], ['趋势线: 0.00', '#e61414'], ['绝底启动: 0.00', '#b40000']]}
      ticks={[[279, '200.0'], [336, '100.0']]}
    >
      <Dots y={279.5} />
      <Dots y={336.5} />
      <Dots y={395.5} />
      <Note x={1} y={290}>公众号：铭达指标</Note>
      <line x1={3} x2={1250} y1={301} y2={301} stroke="#00e600" strokeWidth={2} />
      <line x1={3} x2={1250} y1={335.5} y2={335.5} stroke="#fff" strokeWidth={3} />
      <line x1={3} x2={1250} y1={383} y2={383} stroke="#ff1080" strokeWidth={2} />
      {pinkTicks.map(([i, a, b]) => <rect key={i} x={barX(i) - 2} y={a / 3 + 245} width={4} height={(b - a) / 3} fill="#ff00ff" />)}
      {cyanTicks.map(([i, a, b]) => <rect key={i} x={barX(i) - 2} y={a / 3 + 245} width={4} height={(b - a) / 3} fill="#00ffff" />)}
      <Line p={slowLine} c="#c80000" />
      <line x1={1192} x2={1250} y1={395.5} y2={395.5} stroke="#c80000" strokeWidth={2} />
      <Band />
      {[649, 659, 669, 1184, 1190, 1247].map((x) => <rect key={x} x={x} y={383} width={4} height={7} fill="#ffff00" />)}
      {badges.map((x) => <rect key={x} x={x - 3} y={365} width={6} height={31} fill={x === 709.5 ? '#ff2000' : '#ff0080'} />)}
      {badges.map((x) => <PlusBadge key={x} x={x} y={357} />)}
      {badges.map((x) => <Note key={x} x={x} y={375}>加仓拉升</Note>)}
      <Note x={724} y={382}>绝底启动</Note>
      <MoneyBag x={710} y={367} />
      <Note x={1158} y={393} c="#fff">WWW.TDXGSW.CN</Note>
    </Panel>

    <Panel
      top={398} height="h-[81px]" title="黄金筹码副图"
      labels={[['主力筹码: 0.00', '#ff8040'], ['散户筹码: 3.37', '#1414dc'], ['控盘线: 8.24', '#dc1414']]}
      ticks={[[441, '15.00']]}
    >
      <Dots y={441.5} />
      <Note x={1} y={474}>淘宝店铺：股道侠知识铺</Note>
      <Line p={chipDash} c="#c80000" dash="4 3" w={1.3} />
      {layered(warm, warmShades)}
      {layered(cool, coolShades)}
      <rect x={3} y={476} width={1247} height={2} fill="#28248c" />
      {redUp.map(([x, y]) => <path key={x} d={`M${x} ${y - 3} L${x + 7} ${y + 8} H${x - 7} Z`} fill="#ff0000" />)}
      {greenDown.map(([x, y]) => <path key={x} d={`M${x - 8} ${y - 1} H${x + 8} L${x} ${y + 8} Z`} fill="#00ff00" />)}
    </Panel>

    <Panel
      top={479} height="h-[110px]" title="资金动能-笑"
      labels={[['REFLINE: 0.00', '#d2d2d2'], ['X3: 0.00', '#c81414'], ['X4: -6.09', '#14c814'], ['资金动能A: -6.09', '#e6e600'], ['资金动能B: -5.03', '#14dcdc'], ['涨区: 1.60', '#14c814'], ['低买: 0.00', '#c81414']]}
      ticks={[[521, '15.00'], [554, '0.00']]}
    >
      <Dots y={521.5} />
      <Note x={1} y={584} c="#6e6e6e">用到未来数据</Note>
      {Array.from({ length: 130 }, (_, i) => {
        const x = barX(i);
        const y = i === 129 ? 590 : at(momA, x);
        return (
          <g key={i}>
            <rect x={x - 5} y={Math.min(y, 554)} width={10} height={Math.abs(y - 554)} fill={y < 554 ? '#b40000' : '#009600'} />
            <rect x={x - 3.5} y={Math.min(y, 554)} width={7} height={Math.abs(y - 554)} fill={y < 554 ? '#ff0000' : '#00ff00'} />
          </g>
        );
      })}
      <line x1={3} x2={1250} y1={554} y2={554} stroke="#d08080" strokeDasharray="2 3" />
      <path d="M428.500 541 V554 M688.500 541 V554" stroke="#ff0000" strokeWidth={2} />
      <Line p={momRange} c="#00aa00" w={1.5} />
      <Line p={momA} c="#ffff00" w={2} />
      <Line p={momB} c="#00ffff" w={2} />
      {([[14, 557], [439, 559], [623, 558], [690, 566], [931, 559], [1097, 559], [1222, 570]] as Pt[]).map(([x, y]) => <Arrow key={x} x={x} y={y} up />)}
      {([[91, 547], [246, 554], [285, 552], [322, 551], [507, 531], [545, 528], [796, 516], [999, 544]] as Pt[]).map(([x, y]) => <Arrow key={x} x={x} y={y} />)}
    </Panel>

    <Panel
      top={589} height="h-[76px]" title="九五至尊张"
      labels={[['JWZZ: -130.67', '#d2d2d2'], ['极弱: -150.00', '#dcdc00'], ['强势: 95.00', '#dc00dc']]}
      ticks={[[615, '350.0']]}
    >
      <Dots y={615.5} />
      <line x1={3} x2={1249} y1={635.5} y2={635.5} stroke="#c800c8" strokeWidth={1.5} />
      <line x1={3} x2={1249} y1={656.5} y2={656.5} stroke="#c8c800" strokeWidth={1.5} />
      <Line p={jwzz} c="#e6e6e6" />
      <Note x={1249} y={642}>机构卖</Note>
      <Pointer raw={[400, 395, 449, 410, 437, 428, 450, 446, 507, 540, 436, 470, 424, 452, 413, 463]} x0={0} y0={475} />
      <Pointer raw={[1411, 358, 1478, 408, 1508, 447, 1520, 433, 1545, 507, 1486, 490, 1497, 474, 1470, 450]} x0={0} y0={475} />
      <Pointer raw={[1173, 387, 1245, 427, 1278, 458, 1290, 438, 1317, 507, 1258, 502, 1267, 483, 1240, 460]} x0={670} y0={475} />
    </Panel>

    <Panel
      top={665} height="h-[60px]" title="筹码监测幅图"
      labels={[['获利盘: 6.11', '#e6e600'], ['活筹: 24.47', '#e6e6e6'], ['获利筹码: -18.36', '#c800c8'], ['换手率: 5.95', '#e6e6e6'], ['量比: 17.00', '#e6e6e6'], ['主力控盘系数: 11.29', '#e6e600'], ['股民指标: 3.85', '#c800c8'], ['顶筹价: 35.16', '#c81414'], ['中筹价: 26.83', '#c81414'], ['底筹价: 13.00', '#14dcdc'], ['主力线: 23.44', '#1414dc']]}
      ticks={[[685, '60.00'], [709, '30.00']]}
    >
      <Dots y={709.5} />
      <polygon points={`${str(monTop)} 1250,709 ${str([...monCyan].reverse())}`} fill="#ff0000" />
      <polygon points={`${str(monBlue)} ${str([...monCyan].reverse())}`} fill="#0094ff" />
      <path d="M4 719 H205 L300 718" stroke="#507800" fill="none" />
      <polygon points="462,717 490,707 534,703 520,712 500,717" fill="#f0c000" />
      <polygon points="495,713 520,709 535,710 515,716 498,718" fill="#c878f0" />
      <path d="M488 716 L502 706" stroke="#ff0000" strokeWidth={4} />
      <path d="M500 708 L530 703 M560 704 L640 709" stroke="#40d840" strokeWidth={1.5} />
      <polygon points="768,711 795,702 835,697 870,697 830,706 780,713" fill="#f0c000" />
      <polygon points="765,708 790,699 820,697 795,705" fill="#c878f0" />
      <path d="M690 710 L735 710 M765 705 L785 700 M856 695 H869 M902 696 H970 M978 693 H1091 M1136 695 H1188" stroke="#40d820" strokeWidth={1.5} />
      <path d="M1192 699 H1250" stroke="#c878f0" strokeWidth={2} />
      <path d="M1208 701 H1250" stroke="#f0b000" strokeWidth={2} />
      <Line p={monBlue} c="#0000ff" w={2} />
      <Line p={monCyan} c="#00ffff" w={2.5} />
      {smallBags.map((x) => (
        <path key={x} d={`M${x - 3} 718 H${x + 3} L${x + 2} 720 L${x + 5} 725 H${x - 5} L${x - 2} 720 Z`} fill="#fff0a8" stroke="#6b3a1e" />
      ))}
      {([[526, 706], [718.5, 708], [738, 705], [777, 699], [816, 693], [970, 693]] as Pt[]).map(([x, y]) => <MoneyBag key={x} x={x} y={y} />)}
    </Panel>

    <Panel
      top={725} height="h-[88px]" title="三龙聚首"
      labels={[['低控盘: 55.06', '#e6e600'], ['中控盘: 0.00', '#d26464'], ['高控盘: 0.00', '#c800c8'], ['安全分: 82.00', '#14c814'], ['长趋势: 0.00', '#c800c8']]}
      ticks={[[770, '0.00']]}
    >
      <Cells />
      {['趋势', '量能', '中期', '短期'].map((t, i) => <Note key={t} x={1253} y={[761, 775, 790, 804][i]}>{t}</Note>)}
    </Panel>

    <Panel
      top={813} height="h-[70px]" title="黄金庄家控盘" active
      labels={[['无庄控盘: -11.50', '#e6e6e6'], ['开始控盘: 0.00', '#e6e600'], ['有庄控盘: 0.00', '#c81414'], ['高度控盘: 0.00', '#c800c8'], ['主力出货: 0.00', '#14c814']]}
      ticks={[[841, '40.00']]}
    >
      <Dots y={841.5} />
      <Note x={1} y={880}>淘宝店铺：股道侠知识铺</Note>
      <ControlBars />
    </Panel>
    <TimeAxis />
  </>
);

/* ---------- chip distribution ---------- */
const chipShape = [25, 386, 45, 395, 75, 402, 110, 411, 95, 417, 60, 425, 50, 432, 48, 440, 60, 450, 62, 458, 58, 462, 115, 465, 180, 468, 330, 472, 330, 474, 580, 475, 580, 479, 745, 480, 745, 483, 890, 484, 805, 487, 672, 491, 555, 494, 485, 498, 500, 502, 400, 507, 388, 510, 542, 514, 450, 518, 295, 520, 240, 525, 275, 529, 297, 533, 383, 537, 380, 541, 155, 543, 155, 545, 25, 545]
  .map((v, i) => (i % 2 ? v / 3 - 25 : (v - 25) / 3).toFixed(1))
  .join(' ');

const ChipColumn = () => (
  <aside className="flex w-[293px] shrink-0 flex-col border-t border-r border-t-[#808080] border-r-[#960000]">
    <header className="flex h-6 items-start pt-px pr-[5px] pl-[3px] text-[#00b4c8]">
      <h2 className="leading-5">603667 五洲新春</h2>
      <div className="ml-auto flex items-start gap-1.5">
        <svg className="h-5 w-[21px]" viewBox="0 0 21 20">
          <rect x="0.500" y="0.500" width="20" height="19" fill="none" stroke="#e02020" />
          <path d="M5 2 V18" stroke="#404040" />
          <path d="M5 3.500 H10 M5 5.500 H15 M5 7.500 H18" stroke="#007800" />
          <path d="M5 10.500 H15 M5 12.500 H12 M5 14.500 H9 M5 16.500 H10" stroke="#e02020" />
        </svg>
        <svg className="h-5 w-4" viewBox="0 0 16 20"><path d="M2 1 L5 4 L15 9 L3 18 L1 18 Z" fill="#ff2000" /><path d="M1 4 L8 9 L2 15 Z" fill="#ffff00" /></svg>
        <svg className="h-5 w-4" viewBox="0 0 16 20"><path d="M1 1 L15 8 L3 17 L6 9 Z" fill="#00f000" /><path d="M1 3 L5 9 L1 17 Z" fill="#0000ff" /></svg>
        <svg className="h-[18px] w-[18px]" viewBox="0 0 18 18">
          <rect width="18" height="18" fill="#c0c0d8" /><rect x="1" y="2" width="11" height="7" fill="#00c8dc" /><rect x="11" y="1" width="6" height="7" fill="#ffe600" />
          <path d="M6 8 L12 4 V8 Z" fill="#fff" /><path d="M2 12.500 H6 M8 12.500 H15 M2 15.500 H6 M8 15.500 H15" stroke="#202060" />
        </svg>
      </div>
    </header>
    <svg className="h-[200px] w-full">
      <polygon points={chipShape} fill="#fafafa" />
      <line x1={0} x2={177} y1={140} y2={140} stroke="#54fcfc" />
      <line x1={0} x2={289} y1={176.500} y2={176.500} stroke="#c0c0c0" />
      <line x1={0.5} x2={0.5} y1={171} y2={182} stroke="#ffff00" />
    </svg>
    <div className="mt-auto border-b border-[#960000] pb-[5px] pl-[5px] leading-[21px] whitespace-nowrap text-[#c0c0c0]">
      <p>成本分布,日期:2025-04-08</p>
      <p>获利比例: 6.1%</p>
      <p>18.87处获利盘: 6.1%</p>
      <p>平均成本: 26.83</p>
      <p>90%成本21.20-31.06集中18.8%</p>
      <p>70%成本24.30-28.20集中7.3%</p>
    </div>
  </aside>
);

const QuoteColumn = () => (
  <aside className="flex w-[135px] shrink-0 flex-col overflow-hidden border-t border-[#808080] font-['Liberation_Sans','Noto_Sans_CJK_SC',sans-serif] whitespace-nowrap">
    <div className="grid grid-cols-[72px_72px] gap-x-[15px] gap-y-1 border-b border-[#960000] pt-[5px] pb-[7px] pl-[17px]">
      <button className="h-[26px] border border-[#e02828] text-[#e02828]">闪电买入</button>
      <button className="h-[26px] border border-[#00d200] text-[#00d200]">闪电卖出</button>
      <button className="h-[26px] border border-[#e02828] text-[#e02828]">普通买入</button>
      <button className="h-[26px] border border-[#00d200] text-[#00d200]">普通卖出</button>
    </div>
    <div className="flex justify-between pt-px pl-2 text-[17px] leading-[26px]">
      <span className="text-[#c0c0c0]">603667</span>
      <a href="#season" className="text-[#2878ff]">单季</a>
    </div>
    <svg className="h-[130px] w-full">
      {['4.90', '3.68', '2.45', '1.23', '0.00'].map((t, i) => (
        <text key={t} x={53} y={[18, 42, 65, 88, 111][i]} textAnchor="end" fontSize={14} fontWeight={700} fill="#c8c8c8">{t}</text>
      ))}
      <path d="M56.500 14 V106.500 H135" fill="none" stroke="#404040" />
      {[[70, 28], [80, 23], [90, 29], [100, 76]].map(([x, y]) => <rect key={x} x={x} y={y} width={8} height={105 - y} fill="#ff4000" />)}
      <text x={74} y={124} fontSize={14} fontWeight={700} fill="#c8c8c8">2022</text>
    </svg>
    <div className="mt-auto grid h-9 grid-cols-[97px_1fr] overflow-hidden pl-1.5 text-[17px] leading-[26px] text-[#b0b0b0]">
      <span>日期</span><span>融资</span>
      <span>03-12</span><span>12.0</span>
    </div>
  </aside>
);

/* ---------- training dialog ---------- */
const PushButton: React.FC<{ className: string; children: React.ReactNode }> = ({ className, children }) => (
  <button className={`h-7 border-2 border-[#808080] bg-linear-to-b from-white to-[#dedede] text-center leading-6 ${className}`}>{children}</button>
);
const Tick: React.FC<{ id: string; label: string }> = ({ id, label }) => (
  <div className="flex items-center gap-[7px]">
    <input id={id} type="checkbox" className="size-4 appearance-none border-2 border-[#8c8c8c] bg-[#f4f2ee]" />
    <label htmlFor={id}>{label}</label>
  </div>
);

const trades: string[][] = [
  ['S', '20250410', '卖出', '77.77', '14300', '1112110.00'],
  ['B', '20250409', '买入', '72.85', '14300', '1041754.00'],
  ['S', '20250912', '卖出', '49.71', '21100', '1048880.00'],
  ['B', '20250912', '买入', '47.57', '10500', '499485.00'],
  ['B', '20250911', '买入', '47.12', '10600', '499471.00'],
];

const TrainingDialog = () => (
  <div role="dialog" aria-label="训练模式" className="absolute top-[213px] right-[2px] flex h-[705px] w-[403px] flex-col bg-[#f0f0f0] font-['Noto_Sans','Noto_Sans_CJK_SC',sans-serif] text-[15px] leading-5 whitespace-nowrap text-[#1a1a1a]">
    <div className="flex h-[27px] shrink-0 items-center justify-between bg-[#b42e32] pr-[5px] pl-1.5 text-white">
      <h1>训练模式</h1>
      <button aria-label="关闭"><X size={18} strokeWidth={1} /></button>
    </div>
    <div className="flex min-h-0 flex-1 flex-col border-3 border-t-0 border-[#c8c8c8] pl-px">
      <div className="flex items-center pt-[7px] pr-2 pl-[3px]">
        <Tick id="random" label="随机提取数据" />
        <div className="relative ml-auto">
          <select aria-label="日期" className="h-[26px] w-[134px] appearance-none border-2 border-[#a0a0a0] bg-white pl-[3px] font-['Liberation_Mono',monospace] text-[13px] whitespace-pre">
            <option>2025/ 4/ 8</option>
          </select>
          <span className="pointer-events-none absolute top-0 right-0 flex h-full w-6 items-center justify-center border-2 border-[#a0a0a0] text-[8px] text-[#808080]">▼</span>
        </div>
        <PushButton className="ml-[9px] w-[109px]">更换至此日期</PushButton>
      </div>
      <p className="mt-[7px] pl-1 text-[#ff0000]">
        五洲新春 <span className="pl-1 font-['Liberation_Mono',monospace] text-[13px]">20250408 30.69</span>
      </p>
      <div className="mt-2 flex items-center pr-[7px]">
        <label htmlFor="fund">初始资金</label>
        <input id="fund" defaultValue="1000000" className="ml-3 h-7 w-[93px] border-2 border-[#a0a0a0] pl-1 text-[#909090]" />
        <label htmlFor="fee" className="ml-1">手续费</label>
        <input id="fee" defaultValue="0.1" className="ml-3 h-7 w-[55px] border-2 border-[#a0a0a0] text-center text-[#909090]" />
        <span className="ml-1.5">%</span>
        <PushButton className="ml-auto w-[81px]">记录导出</PushButton>
      </div>
      <hr className="mt-[11px] mr-1.5 border-[#a0a0a0]" />
      <div className="mt-2 flex pr-[7px] pl-[7px]">
        <PushButton className="w-[81px]">下一K 线</PushButton>
        <PushButton className="ml-[11px] w-[81px]">自动播放</PushButton>
        <PushButton className="ml-auto w-[81px]">重新训练</PushButton>
        <PushButton className="ml-3 w-[81px]">关闭训练</PushButton>
      </div>
      <div className="mt-[9px] flex gap-[11px] pl-[7px]">
        <PushButton className="w-[81px]">买入</PushButton>
        <PushButton className="w-[81px]">卖出</PushButton>
      </div>
      <div className="mt-3 flex items-center pr-[17px] pl-[7px]">
        <label htmlFor="speed">播放步长</label>
        <input
          id="speed" type="range" min="0" max="10" defaultValue="1"
          className="ml-[15px] h-5 w-[94px] appearance-none bg-transparent [&::-webkit-slider-runnable-track]:h-0.5 [&::-webkit-slider-runnable-track]:bg-[#909090] [&::-webkit-slider-thumb]:-mt-2 [&::-webkit-slider-thumb]:h-[17px] [&::-webkit-slider-thumb]:w-2 [&::-webkit-slider-thumb]:appearance-none [&::-webkit-slider-thumb]:border-r-2 [&::-webkit-slider-thumb]:border-b-2 [&::-webkit-slider-thumb]:border-[#909090] [&::-webkit-slider-thumb]:bg-[#f0f0f0]"
        />
        <span className="ml-[13px]">0.5秒/步</span>
        <span className="ml-auto">按空格键下一K线</span>
      </div>
      <hr className="mt-2 border-[#a0a0a0]" />
      <div className="mt-1 pl-1 leading-[21px]">
        <p className="flex gap-[26px]"><span>当前资产: 1118118.98</span><span>资金余额: 1118118.98</span></p>
        <p className="flex gap-14"><span>多头市值: 0.00</span><span>空头市值: 0.00</span></p>
        <p className="flex gap-8"><span>帐户盈亏: 118118.98</span><span>盈亏比例: 11.81%</span></p>
      </div>
      <hr className="mt-7 border-[#a0a0a0]" />
      <div className="mt-1.5 flex items-stretch border-b border-[#a0a0a0] pr-4 pl-px">
        <button className="h-[29px] w-[74px] border-t-2 border-l-2 border-[#707070] bg-[#f8f8f8]">交易记录</button>
        <button className="ml-[5px] w-[75px] border-r-2 border-[#707070]">持仓品种</button>
        <div className="mb-2 ml-auto flex items-center gap-[23px]">
          <Tick id="cur" label="当前品种" />
          <Tick id="hide" label="隐藏日期" />
        </div>
      </div>
      <div className="min-h-0 flex-1 overflow-hidden bg-white">
        <table className="w-[432px] table-fixed text-center leading-[22px]">
          <thead className="bg-[#f0f0f0]">
            <tr className="h-[27px] border-b-2 border-[#a0a0a0]">
              <th className="w-[111px] border-r-2 border-[#a0a0a0] pl-[7px] text-left font-normal">时间</th>
              <th className="w-[69px] border-r-2 border-[#a0a0a0] font-normal">操作</th>
              <th className="w-[75px] border-r-2 border-[#a0a0a0] font-normal">成交价</th>
              <th className="w-[75px] border-r-2 border-[#a0a0a0] font-normal">成交量</th>
              <th className="w-[102px] font-normal">成交额</th>
            </tr>
          </thead>
          <tbody>
            <tr className="h-[3px]"><td colSpan={5} /></tr>
            {trades.map(([side, ...cells], n) => (
              <tr key={n}>
                {cells.map((c, k) => (
                  <td key={k} className={k === 0 ? 'pl-0.5' : ''}>
                    {k === 0 ? (
                      <span className="flex items-center gap-1">
                        <b className={`size-[19px] border-2 border-[#a0a0a0] text-center font-['Liberation_Mono',monospace] text-[17px] leading-[15px] ${side === 'S' ? 'text-[#ff0000]' : 'text-[#808080]'}`}>{side}</b>
                        {c}
                      </span>
                    ) : c}
                  </td>
                ))}
              </tr>
            ))}
          </tbody>
        </table>
      </div>
      <div className="h-[22px] shrink-0 bg-[#f4f3f2] pt-[3px] pl-[21px]">
        <div className="h-[13px] w-[142px] border-2 border-[#a8a8a8] bg-[#f4f3f2]" />
      </div>
    </div>
  </div>
);

const App: React.FC = () => (
  <div className="relative flex min-h-screen overflow-hidden rounded-md bg-black font-[Roboto,'Noto_Sans_CJK_SC',sans-serif] text-[15px] leading-5">
    <main className="flex min-w-0 flex-1 flex-col">
      <Toolbar />
      <Charts />
      <IndicatorBar />
      <BoardTabs />
    </main>
    <ChipColumn />
    <QuoteColumn />
    <TrainingDialog />
  </div>
);

export default App;
